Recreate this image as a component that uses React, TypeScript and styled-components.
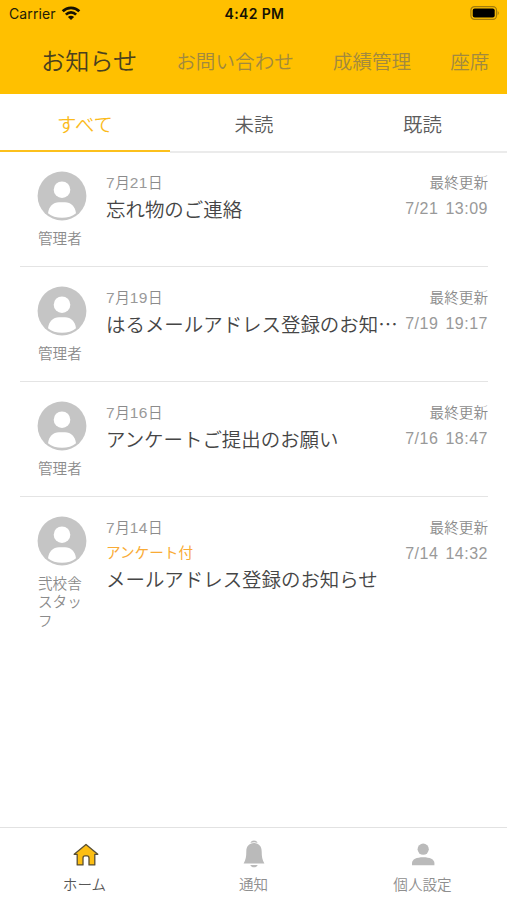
import React from "react";
import styled, { createGlobalStyle } from "styled-components";

const GlobalStyle = createGlobalStyle`
  * { box-sizing: border-box; }
  body {
    margin: 0;
    background: #fff;
    font-family: "Noto Sans CJK JP", "Noto Sans", sans-serif;
    font-weight: 350;
  }
`;

const Screen = styled.div`
  width: 507px;
  height: 900px;
  display: flex;
  flex-direction: column;
  overflow: hidden;
  background: #fff;
`;

const Header = styled.header`
  height: 94px;
  flex: none;
  background: #ffc000;
`;

const StatusBar = styled.div`
  height: 28px;
  display: grid;
  grid-template-columns: 1fr auto 1fr;
  align-items: center;
  padding: 0 7px 0 9px;
  font: 400 14px/28px Inter, sans-serif;
  color: #221c08;
`;

const Carrier = styled.div`
  display: flex;
  align-items: center;
  gap: 5px;
  letter-spacing: 0.1px;
`;

const Clock = styled.div`
  font-weight: 600;
  font-size: 14px;
  letter-spacing: 0.35px;
  color: #161204;
`;

const Battery = styled.svg`
  justify-self: end;
  display: block;
  margin-top: -2px;
`;

const MainNav = styled.nav`
  height: 66px;
  display: flex;
  align-items: center;
  padding-left: 41px;
  gap: 39px;
  white-space: nowrap;
`;

const NavItem = styled.span<{ $active?: boolean }>`
  font-size: ${(p) => (p.$active ? "24.2px" : "19.6px")};
  line-height: 36px;
  margin-top: ${(p) => (p.$active ? "-2px" : "0")};
  color: ${(p) => (p.$active ? "#4a411f" : "#a1893f")};
`;

const Tabs = styled.div`
  height: 59px;
  flex: none;
  display: grid;
  grid-template-columns: 170px 168px 169px;
`;

const Tab = styled.div<{ $active?: boolean }>`
  height: ${(p) => (p.$active ? "58.4px" : "59px")};
  display: flex;
  justify-content: center;
  padding-top: 15px;
  font-size: 19.4px;
  line-height: 30px;
  color: ${(p) => (p.$active ? "#fbbb1c" : "#5c5c5c")};
  border-bottom: 2px solid ${(p) => (p.$active ? "#fcc01c" : "#ebebeb")};
`;

const List = styled.main`
  flex: 1;
  padding: 0 19px 0 20px;
  margin-top: -1px;
`;

const Row = styled.article`
  height: 115px;
  display: flex;
  padding: 19px 0 0 17px;
  border-bottom: 1px solid #e4e4e4;

  &:last-child {
    height: 135px;
    border-bottom: 0;
  }
`;

const Sender = styled.div`
  width: 50px;
  flex: none;
`;

const Avatar = styled.svg`
  display: block;
  width: 50px;
  height: 50px;
`;

const SenderName = styled.div`
  width: 49px;
  margin-top: 8px;
  padding-left: 1px;
  font-size: 14.6px;
  line-height: 18.3px;
  color: #8b8b8b;
`;

const Body = styled.div`
  flex: 1;
  min-width: 0;
  margin-left: 19px;
`;

const DateText = styled.div`
  font-size: 14.6px;
  line-height: 22px;
  color: #8b8b8b;
`;

const Digits = styled.span`
  font-family: "Liberation Sans", sans-serif;
  font-size: 15.5px;
  line-height: 1;
  letter-spacing: 0.5px;
  color: #999;
`;

const Badge = styled.div`
  margin-top: 3px;
  font-size: 14.6px;
  line-height: 22px;
  font-weight: 400;
  color: #f9ab35;
`;

const Title = styled.div`
  margin-top: 1px;
  font-size: 19.45px;
  line-height: 30px;
  color: #454545;
  white-space: nowrap;
`;

const Updated = styled.div`
  flex: none;
  text-align: right;
  font-size: 14.6px;
  line-height: 22px;
  color: #8b8b8b;
`;

const Time = styled.div`
  margin-top: 4.5px;
  font-family: "Liberation Sans", sans-serif;
  font-size: 16px;
  letter-spacing: 0.5px;
  word-spacing: 2.2px;
  color: #999;
`;

const BottomBar = styled.nav`
  height: 73px;
  flex: none;
  display: grid;
  grid-template-columns: repeat(3, 1fr);
  border-top: 1px solid #e2e2e2;
`;

const BottomItem = styled.div<{ $active?: boolean }>`
  display: flex;
  flex-direction: column;
  align-items: center;
  padding-top: 12px;
  font-size: 14.6px;
  line-height: 22px;
  color: ${(p) => (p.$active ? "#565656" : "#8e8e8e")};

  svg {
    display: block;
    margin-bottom: 5px;
  }
`;

const PersonBadge = () => (
  <Avatar viewBox="0 0 50 50">
    <circle cx="25" cy="25" r="24.4" fill="#c5c5c5" />
    <circle cx="25" cy="18.7" r="8.3" fill="#fff" />
    <path d="M11 42.200c1-7 5-11 11-11h6c6 0 10 4 11 11-3.500 3-8.500 4.600-14 4.600s-10.500-1.600-14-4.600z" fill="#fff" />
  </Avatar>
);

const WifiIcon = () => (
  <svg width="20" height="16" viewBox="0 0 20 16">
    <g fill="none" stroke="#171203" strokeWidth="2.700">
      <path d="M1.700 5.300C6.300.600 13.700.600 18.300 5.300" />
      <path d="M4.900 8.600c2.900-2.900 7.300-2.900 10.200 0" />
    </g>
    <path d="M6.900 11c1.800-1.600 4.400-1.600 6.200 0L10 14.100z" fill="#171203" />
  </svg>
);

const HomeIcon = () => (
  <svg width="28" height="28" viewBox="0 0 28 28">
    <path
      d="M15 4.500 3.200 14.300H6.200V24.900h5.800v-7q0-2 2-2h2q2 0 2 2v7h5.800V14.300h3z"
      fill="#fcbe13"
      stroke="#594f34"
      strokeWidth="1.300"
      strokeLinejoin="round"
    />
  </svg>
);

const BellIcon = () => (
  <svg width="28" height="28" viewBox="0 0 28 28">
    <path d="M10.300 2.900a4 4 0 0 1 7.400 0q-3.700-1.500-7.400 0z" fill="#bababa" />
    <path d="M14 3.100c5 0 7.700 3.600 7.700 8.300 0 5 .5 8 2.700 12H3.600c2.200-4 2.700-7 2.700-12 0-4.700 2.700-8.300 7.700-8.300z" fill="#bababa" />
    <path d="M10.300 25h7.400c-.7 1.700-2 2.300-3.700 2.300s-3-.6-3.700-2.300z" fill="#bababa" />
  </svg>
);

const UserIcon = () => (
  <svg width="28" height="28" viewBox="0 0 28 28">
    <circle cx="14.200" cy="9.200" r="5.600" fill="#bababa" />
    <path d="M3 25.300v-2c0-4 4.500-6 11.200-6s11.200 2 11.200 6v2z" fill="#bababa" />
  </svg>
);

const notices = [
  { month: 7, day: 21, title: "忘れ物のご連絡", time: "7/21 13:09", sender: "管理者" },
  { month: 7, day: 19, title: "はるメールアドレス登録のお知…", time: "7/19 19:17", sender: "管理者" },
  { month: 7, day: 16, title: "アンケートご提出のお願い", time: "7/16 18:47", sender: "管理者" },
  { month: 7, day: 14, title: "メールアドレス登録のお知らせ", time: "7/14 14:32", sender: "弐校舎スタッフ", badge: "アンケート付" },
];

export default function App() {
  return (
    <Screen>
      <GlobalStyle />
      <Header>
        <StatusBar>
          <Carrier>
            Carrier
            <WifiIcon />
          </Carrier>
          <Clock>4:42 PM</Clock>
          <Battery width="30" height="14" viewBox="0 0 30 14">
            <rect x="0.900" y="0.700" width="25.600" height="12.600" rx="3.600" fill="none" stroke="#a27c0b" strokeWidth="1.200" />
            <rect x="2.700" y="2.500" width="22" height="9" rx="2" fill="#000" />
            <path d="M27.700 4.700q2.200 2.300 0 4.600z" fill="#a27c0b" />
          </Battery>
        </StatusBar>
        <MainNav>
          <NavItem $active>お知らせ</NavItem>
          <NavItem>お問い合わせ</NavItem>
          <NavItem>成績管理</NavItem>
          <NavItem>座席</NavItem>
        </MainNav>
      </Header>
      <Tabs>
        <Tab $active>すべて</Tab>
        <Tab>未読</Tab>
        <Tab>既読</Tab>
      </Tabs>
      <List>
        {notices.map((n) => (
          <Row key={n.time}>
            <Sender>
              <PersonBadge />
              <SenderName>{n.sender}</SenderName>
            </Sender>
            <Body>
              <DateText>
                <Digits>{n.month}</Digits>月<Digits>{n.day}</Digits>日
              </DateText>
              {n.badge && <Badge>{n.badge}</Badge>}
              <Title>{n.title}</Title>
            </Body>
            <Updated>
              最終更新
              <Time>{n.time}</Time>
            </Updated>
          </Row>
        ))}
      </List>
      <BottomBar>
        <BottomItem $active>
          <HomeIcon />
          ホーム
        </BottomItem>
        <BottomItem>
          <BellIcon />
          通知
        </BottomItem>
        <BottomItem>
          <UserIcon />
          個人設定
        </BottomItem>
      </BottomBar>
    </Screen>
  );
}
